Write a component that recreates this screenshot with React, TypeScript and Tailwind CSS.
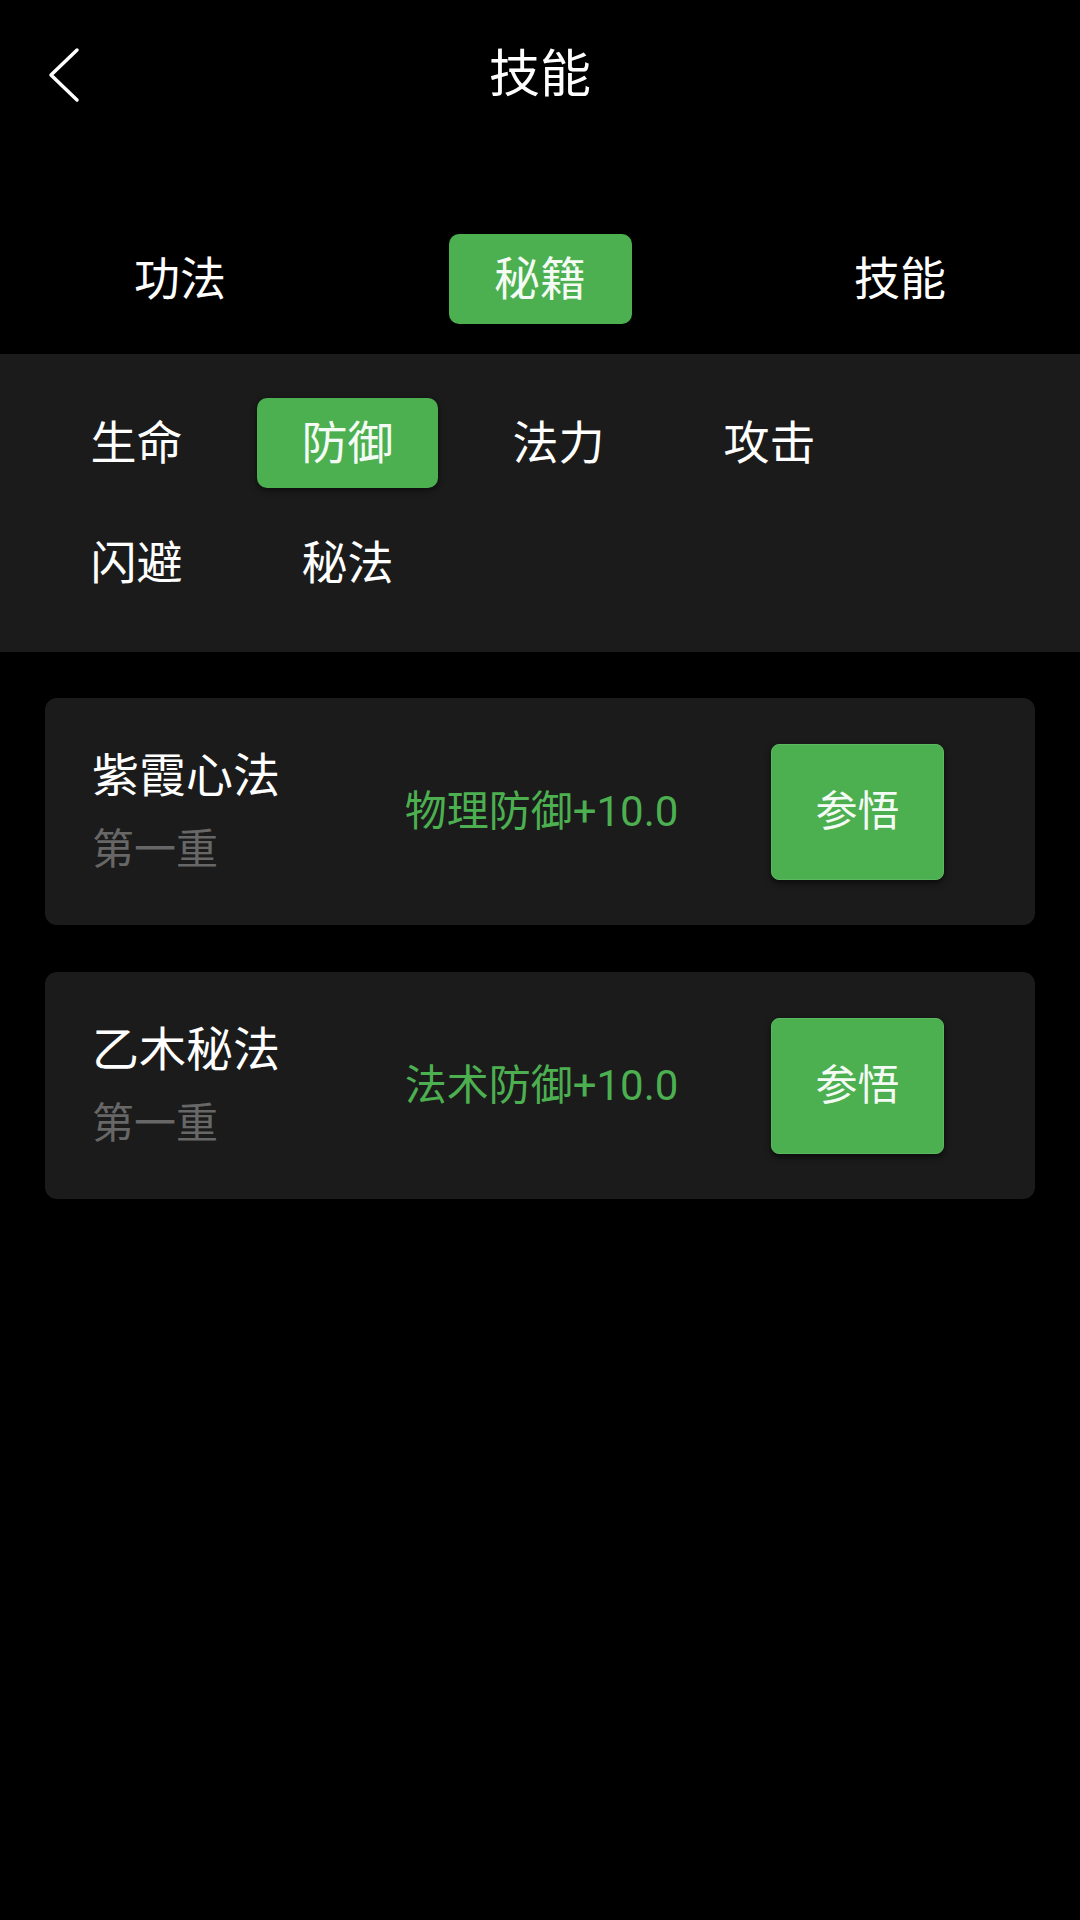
import React from "react";

const FONT = { fontFamily: 'Roboto, "Noto Sans CJK SC", "Noto Sans", sans-serif' };

const topTabs = ["功法", "秘籍", "技能"];
const subTabs = ["生命", "防御", "法力", "攻击", "闪避", "秘法"];
const items = [
  { name: "紫霞心法", level: "第一重", effect: "物理防御+10.0" },
  { name: "乙木秘法", level: "第一重", effect: "法术防御+10.0" },
];

export default function App() {
  return (
    <div className="w-[1080px] min-h-[1920px] bg-black text-white" style={FONT}>
      {/* Header */}
      <div className="grid h-[150px] grid-cols-[140px_1fr_140px] items-center">
        <div className="flex items-center pl-[48px]">
          <svg width="34" height="56" viewBox="0 0 34 56" fill="none">
            <path d="M29 3 L3 28 L29 53" stroke="white" strokeWidth="3.5" strokeLinecap="round" strokeLinejoin="round" />
          </svg>
        </div>
        <div className="text-center text-[51px] leading-[60px]">技能</div>
        <div />
      </div>

      {/* Top tabs */}
      <div className="grid grid-cols-3 pt-[84px] pb-[30px]">
        {topTabs.map((t, i) => (
          <div key={t} className="flex justify-center">
            <div
              className={
                i === 1
                  ? "flex h-[90px] w-[183px] items-center justify-center rounded-[10px] bg-[#4caf50] text-[46px] text-[#f4fbf4]"
                  : "flex h-[90px] w-[183px] items-center justify-center text-[46px]"
              }
            >
              {t}
            </div>
          </div>
        ))}
      </div>

      {/* Sub tabs panel */}
      <div className="flex flex-wrap gap-x-[30px] gap-y-[30px] bg-[#1b1b1b] px-[46px] pt-[44px] pb-[44px]">
        {subTabs.map((t, i) => (
          <div
            key={t}
            className={
              i === 1
                ? "flex h-[90px] w-[181px] items-center justify-center rounded-[10px] bg-[#4caf50] text-[46px] text-[#f4fbf4] shadow-[0_2px_6px_rgba(0,0,0,0.6)]"
                : "flex h-[90px] w-[181px] items-center justify-center text-[46px]"
            }
          >
            {t}
          </div>
        ))}
      </div>

      {/* List */}
      <div className="flex flex-col gap-[47px] px-[45px] pt-[46px]">
        {items.map((it) => (
          <div key={it.name} className="flex h-[227px] items-center rounded-[12px] bg-[#1b1b1b] pl-[47px] pr-[91px]">
            <div className="flex w-[220px] flex-col">
              <div className="text-[47px] leading-[56px] text-white">{it.name}</div>
              <div className="mt-[20px] text-[42px] leading-[52px] text-[#676767]">{it.level}</div>
            </div>
            <div className="flex-1 text-center text-[42px] leading-[52px] text-[#4caf50]">{it.effect}</div>
            <div className="flex h-[136px] w-[173px] items-center justify-center rounded-[8px] border border-[#5cb860] bg-[#4caf50] text-[42px] text-[#f4fbf4] shadow-[0_3px_6px_rgba(0,0,0,0.6)]">
              参悟
            </div>
          </div>
        ))}
      </div>
    </div>
  );
}
